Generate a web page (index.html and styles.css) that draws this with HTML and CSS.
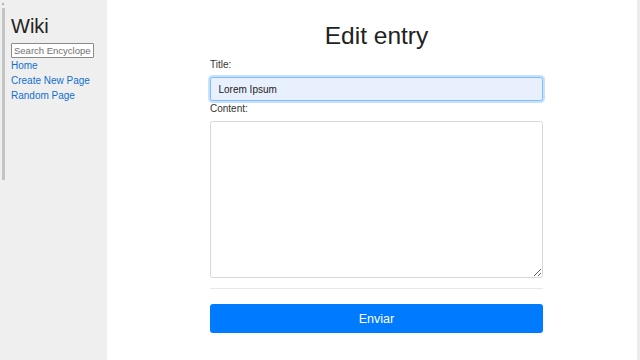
FILE: index.html
```html
<!DOCTYPE html>
<html lang="en">
<head>
<meta charset="utf-8">
<title>Edit entry</title>
<link rel="stylesheet" href="styles.css">
</head>
<body>
<div class="page">
  <aside class="sidebar">
    <div class="scroll-thumb"></div>
    <h2 class="brand">Wiki</h2>
    <form class="search">
      <input class="search-input" type="text" placeholder="Search Encyclopedia">
    </form>
    <a class="nav-link" href="#">Home</a>
    <a class="nav-link" href="#">Create New Page</a>
    <a class="nav-link" href="#">Random Page</a>
  </aside>
  <main class="main">
    <h1 class="title">Edit entry</h1>
    <form class="edit-form">
      <label class="label" for="t">Title:</label>
      <input id="t" class="field field-title" type="text" value="Lorem Ipsum">
      <label class="label" for="c">Content:</label>
      <textarea id="c" class="field field-content"></textarea>
      <hr class="rule">
      <button class="btn" type="button">Enviar</button>
    </form>
  </main>
  <div class="track"></div>
</div>
</body>
</html>
```

FILE: styles.css
```css
* { box-sizing: border-box; }
html, body { margin: 0; height: 100%; }
body {
  font-family: "Liberation Sans", Arial, sans-serif;
  font-size: 10px;
  line-height: 15px;
  color: #212529;
  background: #fff;
}
.page {
  display: flex;
  height: 360px;
  overflow: hidden;
}
.sidebar {
  position: relative;
  width: 107px;
  flex: none;
  background: #efefef;
  padding: 14px 0 0 11px;
  display: flex;
  flex-direction: column;
  align-items: flex-start;
}
.scroll-thumb {
  position: absolute;
  left: 2px;
  top: 8px;
  width: 3px;
  height: 172px;
  background: #c4c4c4;
}
.scroll-thumb::before {
  content: "";
  position: absolute;
  left: 0;
  top: -6px;
  border-left: 1.5px solid transparent;
  border-right: 1.5px solid transparent;
  border-bottom: 3px solid #9a9a9a;
}
.brand {
  margin: 0 0 5px;
  font-size: 20px;
  line-height: 24px;
  font-weight: 400;
  color: #222;
}
.search { margin: 0; }
.search-input {
  display: block;
  width: 83px;
  height: 15px;
  padding: 0 2px;
  font-family: "Liberation Sans", Arial, sans-serif;
  font-size: 9.5px;
  border: 1px solid #8a8a8a;
  border-radius: 1px;
  background: #fff;
  color: #333;
}
.search-input::placeholder { color: #707070; }
.nav-link {
  color: #1070d0;
  text-decoration: none;
  font-size: 10px;
  line-height: 15px;
}
.main {
  flex: 1;
  padding: 21px 0 0 9px;
  display: flex;
  flex-direction: column;
  align-items: center;
}
.title {
  margin: 0 0 5px;
  font-size: 24.5px;
  line-height: 30px;
  font-weight: 400;
  color: #222;
}
.edit-form {
  width: 333px;
  display: flex;
  flex-direction: column;
  margin-top: 1px;
}
.label {
  display: block;
  margin-bottom: 5px;
  line-height: 15px;
  color: #333;
}
.field {
  display: block;
  width: 100%;
  font-family: "Liberation Sans", Arial, sans-serif;
  font-size: 10px;
  color: #222;
  border: 1px solid #d5d8dc;
  border-radius: 2.5px;
  background: #fff;
}
.field-title {
  height: 24px;
  padding: 0 7.5px;
  background: #e8f0fe;
  border-color: #80bdff;
  box-shadow: 0 0 0 2px rgba(0, 123, 255, 0.22);
  outline: none;
}
.field-content {
  height: 157px;
  resize: vertical;
  padding: 4px 7.5px;
}
.rule {
  width: 100%;
  margin: 10px 0 15px;
  border: 0;
  border-top: 1px solid #e8e8e8;
}
.btn {
  height: 29px;
  width: 100%;
  border: 0;
  border-radius: 3px;
  background: #007bff;
  color: #fff;
  font-family: "Liberation Sans", Arial, sans-serif;
  font-size: 12.5px;
}
.track {
  width: 3px;
  flex: none;
  background: #ececec;
}
```
